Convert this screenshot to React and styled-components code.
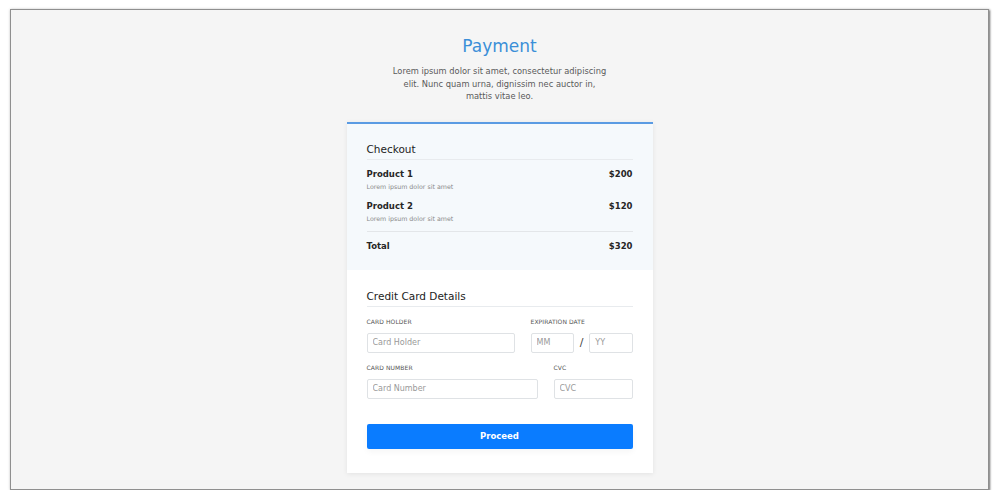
import React from 'react'
import styled, { createGlobalStyle } from 'styled-components'

const GlobalStyle = createGlobalStyle`
  html, body {
    margin: 0;
    padding: 0;
    background: #ffffff;
  }
  body {
    font-family: "DejaVu Sans", "Open Sans", sans-serif;
  }
`

const Frame = styled.div`
  margin: 9px 11px 0 10px;
  height: 481px;
  box-sizing: border-box;
  background: #f5f5f5;
  border: 1px solid #8f8f8f;
  box-shadow: 1px 1px 2px rgba(0, 0, 0, 0.55), 0 0 3px rgba(0, 0, 0, 0.12);
  display: flex;
  flex-direction: column;
  align-items: center;
  padding-top: 26px;
`

const Title = styled.h1`
  margin: 0;
  font-size: 17px;
  font-weight: 400;
  color: #3b8fd8;
  line-height: 20px;
`

const Intro = styled.p`
  margin: 9px 0 0;
  width: 216px;
  text-align: center;
  font-size: 8.3px;
  line-height: 12.5px;
  color: #5a5a5a;
`

const Card = styled.div`
  margin-top: 19px;
  width: 306px;
  background: #fff;
  border-top: 2px solid #5a9be3;
  box-shadow: 0 1px 5px rgba(0, 0, 0, 0.08);
`

const Section = styled.div`
  padding: ${p => p.$pad || '18px 20px 20px'};
  background: ${p => p.$tint ? '#f5f9fc' : '#fff'};
`

const SectionTitle = styled.h2`
  margin: 0;
  font-size: 10.5px;
  font-weight: 400;
  color: #222;
  padding-bottom: 4px;
  border-bottom: 1px solid #e8ebee;
`

const ItemRow = styled.div`
  display: flex;
  justify-content: space-between;
  align-items: flex-start;
  padding-top: ${p => p.$top || '8px'};
`

const ItemName = styled.div`
  font-size: 8.5px;
  font-weight: 600;
  color: #262626;
`

const ItemDesc = styled.div`
  margin-top: 4px;
  font-size: 6.3px;
  color: #8a8a8a;
`

const Price = styled.div`
  font-size: 8.5px;
  font-weight: 600;
  color: #262626;
`

const Divider = styled.div`
  height: 1px;
  background: #e3e6e9;
  margin-top: 9px;
`

const FormGrid = styled.div`
  display: grid;
  grid-template-columns: ${p => p.$cols};
  column-gap: 16px;
  margin-top: ${p => p.$top || '10px'};
`

const Field = styled.div`
  display: flex;
  flex-direction: column;
`

const Label = styled.label`
  font-size: 6px;
  text-transform: uppercase;
  color: #555;
  margin-bottom: 8px;
  letter-spacing: 0.1px;
`

const Input = styled.input`
  box-sizing: border-box;
  width: 100%;
  height: 20px;
  border: 1px solid #dfe2e5;
  border-radius: 2px;
  padding: 0 5px;
  font-family: inherit;
  font-size: 8px;
  color: #333;
  background: #fff;
  outline: none;
  &::placeholder {
    color: #999;
  }
`

const DateRow = styled.div`
  display: flex;
  align-items: center;
  gap: 5px;
`

const Slash = styled.span`
  font-size: 11px;
  color: #444;
  padding: 0 1px;
`

const Button = styled.button`
  margin-top: 25px;
  width: 100%;
  height: 25px;
  border: none;
  border-radius: 2px;
  background: #0a7cff;
  color: #fff;
  font-family: inherit;
  font-size: 8.5px;
  font-weight: 600;
  box-shadow: 0 3px 6px rgba(0, 0, 0, 0.04);
`

const items = [
  { name: 'Product 1', desc: 'Lorem ipsum dolor sit amet', price: '$200' },
  { name: 'Product 2', desc: 'Lorem ipsum dolor sit amet', price: '$120' },
]

export default function App() {
  return (
    <>
      <GlobalStyle />
      <Frame>
        <Title>Payment</Title>
        <Intro>
          Lorem ipsum dolor sit amet, consectetur adipiscing elit. Nunc quam urna, dignissim nec auctor in, mattis vitae leo.
        </Intro>

        <Card>
          {/* checkout */}
          <Section $tint $pad="19px 20px 19px">
            <SectionTitle>Checkout</SectionTitle>
            {items.map((item, i) => (
              <ItemRow key={item.name} $top={i === 0 ? '9px' : '11px'}>
                <div>
                  <ItemName>{item.name}</ItemName>
                  <ItemDesc>{item.desc}</ItemDesc>
                </div>
                <Price>{item.price}</Price>
              </ItemRow>
            ))}
            <Divider />
            <ItemRow $top="9px">
              <ItemName>Total</ItemName>
              <Price>$320</Price>
            </ItemRow>
          </Section>

          {/* credit card */}
          <Section $pad="20px 20px 24px">
            <SectionTitle>Credit Card Details</SectionTitle>
            <FormGrid $cols="148px 1fr" $top="11px">
              <Field>
                <Label>Card Holder</Label>
                <Input placeholder="Card Holder" />
              </Field>
              <Field>
                <Label>Expiration Date</Label>
                <DateRow>
                  <Input placeholder="MM" />
                  <Slash>/</Slash>
                  <Input placeholder="YY" />
                </DateRow>
              </Field>
            </FormGrid>
            <FormGrid $cols="171px 1fr" $top="11px">
              <Field>
                <Label>Card Number</Label>
                <Input placeholder="Card Number" />
              </Field>
              <Field>
                <Label>CVC</Label>
                <Input placeholder="CVC" />
              </Field>
            </FormGrid>
            <Button>Proceed</Button>
          </Section>
        </Card>
      </Frame>
    </>
  )
}
